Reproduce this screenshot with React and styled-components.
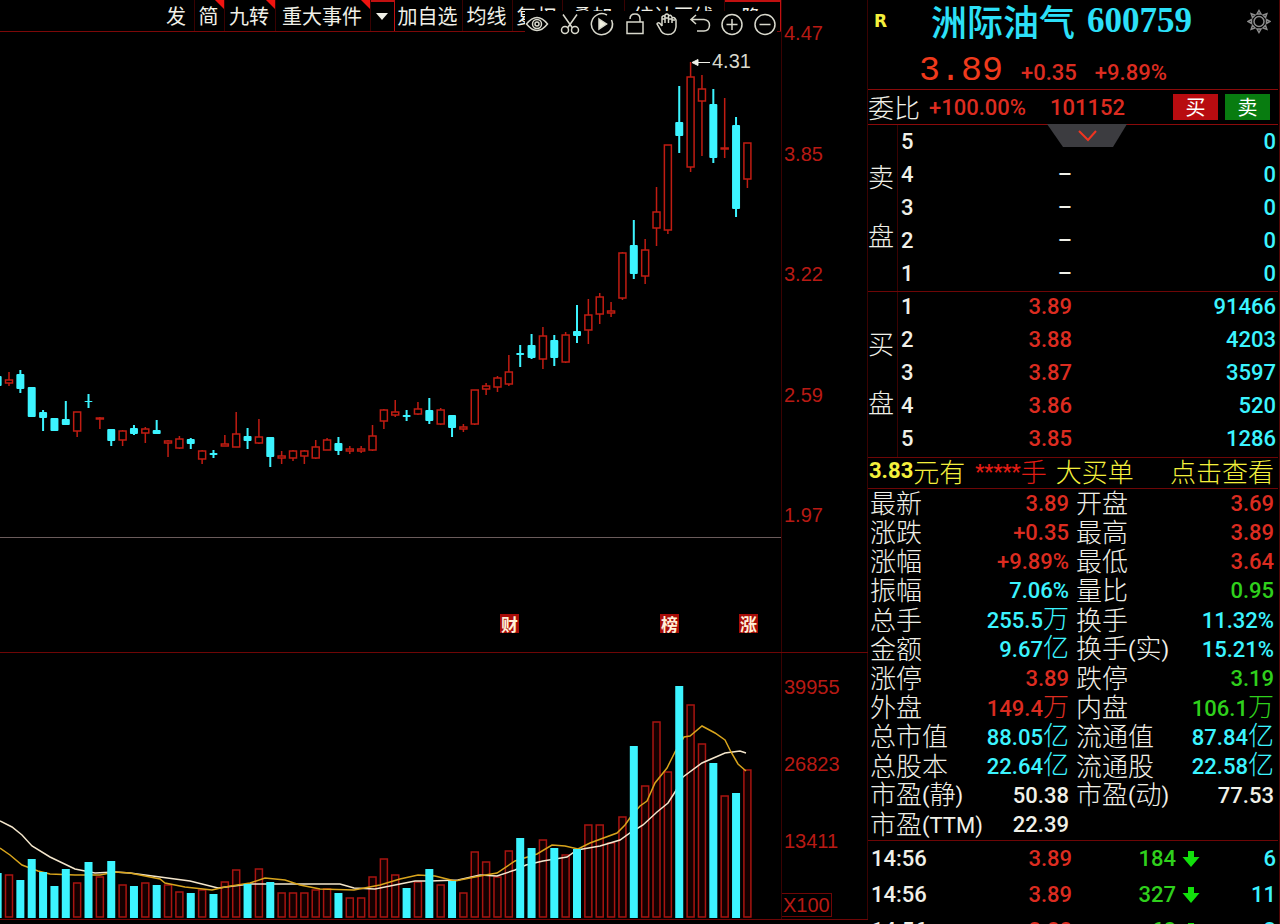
import React from 'react';
import styled, { createGlobalStyle } from 'styled-components';

const CYAN = '#3cf4ff';
const RED = '#dc2c20';
const GREEN = '#2fd01c';
const WHITE = '#f0f0e8';
const YELLOW = '#f4f03c';
const LINE = '#6e0606';
const DIM = '#3a0202';

const Global = createGlobalStyle`
  body { margin: 0; background: #000; }
  * { box-sizing: border-box; }
  button { background: none; border: 0; padding: 0; margin: 0; color: inherit; font: inherit; cursor: pointer; }
  table { border-collapse: collapse; }
  th, td { padding: 0; font-weight: inherit; }
`;

const App = styled.div`
  display: flex;
  height: 100vh;
  overflow: hidden;
  background: #000;
  color: ${WHITE};
  font-family: Roboto, 'Noto Sans CJK SC', sans-serif;
`;

/* ---------- chart side ---------- */

const Charts = styled.main`
  flex: 1;
  min-width: 0;
`;
const Band = styled.section`
  display: flex;
  border-bottom: ${(p) => (p.$line ? `1px solid ${LINE}` : 'none')};
`;
const Plot = styled.div`
  position: relative;
  flex: 1;
  min-width: 0;
  border-bottom: ${(p) => (p.$rule ? '1px solid #6b5c5c' : 'none')};
`;
const Drawing = styled.svg`
  display: block;
  width: 100%;
  height: auto;
`;
const Axis = styled.div`
  display: flex;
  flex-direction: column;
  align-items: flex-start;
  justify-content: ${(p) => (p.$spread ? 'space-between' : 'flex-start')};
  gap: ${(p) => (p.$spread ? 0 : 53)}px;
  width: 87px;
  padding: ${(p) => (p.$spread ? '21px 0 11px' : '22px 0 2px')};
  border-left: 1px solid ${DIM};
  border-right: 1px solid ${DIM};
`;
const Tick = styled.span`
  padding-left: 2px;
  font: 20px/24px 'Liberation Sans', sans-serif;
  color: #b81a14;
`;
const Unit = styled(Tick)`
  margin-top: -13px;
  padding: 0 1px;
  line-height: 22px;
  border: 1px solid ${LINE};
  border-left: 0;
`;

const Toolbar = styled.nav`
  display: flex;
  height: 32px;
  padding-left: 160px;
  border-bottom: 1px solid #7c0808;
`;
const Tool = styled.button`
  position: relative;
  flex: none;
  width: ${(p) => p.$w}px;
  padding-right: 2px;
  overflow: hidden;
  border-right: 1px solid ${(p) => (p.$boxed ? '#c01010' : DIM)};
  border-top: ${(p) => (p.$boxed ? '2px solid #c01010' : 'none')};
  font: 20px/30px 'Noto Sans CJK SC', sans-serif;
  white-space: nowrap;
  &::after {
    content: '';
    display: ${(p) => (p.$flag ? 'block' : 'none')};
    position: absolute;
    top: 0;
    right: 0;
    border-top: 9px solid #f01410;
    border-left: 9px solid transparent;
  }
`;
const Caret = styled.span`
  display: inline-block;
  border-top: 7px solid ${WHITE};
  border-left: 6px solid transparent;
  border-right: 6px solid transparent;
  vertical-align: 5px;
`;
const Floating = styled.div`
  position: absolute;
  top: 11px;
  right: 4px;
  display: flex;
  justify-content: space-between;
  width: 252px;
  height: 27px;
  background: #000;
`;
const IconButton = styled.button`
  width: 24px;
  height: 27px;
  svg { display: block; fill: none; stroke: ${(p) => (p.$muted ? '#8c8c8c' : '#d8d8cc')}; stroke-width: 1.5; }
`;

const Events = styled.div`
  display: flex;
  justify-content: flex-end;
  height: 114px;
  padding: 76px 23px 0 0;
`;
const EventMark = styled.button`
  width: 19px;
  height: 19px;
  margin-right: ${(p) => p.$after}px;
  background: #a80c08;
  color: #fff0d8;
  font: 700 17px/19px 'Noto Sans CJK SC', sans-serif;
`;

/* ---------- quote side ---------- */

const Panel = styled.aside`
  width: 412px;
  padding-right: 1px;
  border-right: 1px solid #500404;
`;
const Header = styled.header`
  height: 90px;
  border-bottom: 1px solid #8a0a0a;
`;
const TitleRow = styled.div`
  display: flex;
  align-items: center;
  height: 42px;
  padding: 0 7px 0 6px;
`;
const Flag = styled.span`
  width: 57px;
  color: ${YELLOW};
  font: 700 17px/20px 'DejaVu Sans', sans-serif;
`;
const Name = styled.h1`
  display: flex;
  align-items: center;
  gap: 12px;
  flex: 1;
  margin: 0;
  padding-bottom: 3px;
  color: #2ce0f8;
  white-space: nowrap;
  font: 500 36px/38px 'Noto Sans CJK SC', sans-serif;
`;
const Code = styled.span`
  padding-top: 3px;
  font: 700 35px/38px 'Liberation Serif', serif;
`;
const Price = styled.div`
  display: flex;
  align-items: baseline;
  gap: 18px;
  padding: 8px 0 0 51px;
  color: ${RED};
  font-size: 22px;
  font-weight: 500;
  line-height: 38px;
`;
const Last = styled.strong`
  color: #f03a1c;
  font: 35px/42px 'Liberation Mono', monospace;
`;
const Commission = styled.div`
  position: relative;
  display: flex;
  align-items: center;
  height: 35px;
  padding-right: 8px;
  border-bottom: 1px solid #8a0a0a;
  color: ${RED};
  font-size: 22px;
  font-weight: 500;
`;
const Label = styled.span`
  width: 61px;
  color: ${WHITE};
  font: 300 26px/32px 'Noto Sans CJK SC', sans-serif;
`;
const Ratio = styled.span`
  width: 121px;
`;
const Trade = styled.button`
  width: 45px;
  height: 26px;
  margin-left: ${(p) => (p.$sell ? 7 : 0)}px;
  background: ${(p) => (p.$sell ? '#087c10' : '#b80c10')};
  color: #fff;
  font: 20px/26px 'Noto Sans CJK SC', sans-serif;
`;
const Spacer = styled.span`
  flex: 1;
`;
const Fold = styled.button`
  position: absolute;
  top: 34px;
  left: 179px;
  width: 80px;
  height: 23px;
  svg { display: block; }
`;

const Book = styled.div`
  display: flex;
  height: ${(p) => (p.$buy ? 166 : 167)}px;
  border-bottom: 1px solid ${LINE};
`;
const Side = styled.div`
  display: flex;
  flex-direction: column;
  align-items: center;
  justify-content: center;
  gap: 33px;
  width: 30px;
  padding: 0 3px 5px 0;
  border-right: 1px solid ${DIM};
  font: 300 26px/26px 'Noto Sans CJK SC', sans-serif;
`;
const Levels = styled.table`
  flex: 1;
  align-self: flex-start;
  font-size: 22px;
  line-height: 26px;
  tr { height: 33px; }
  td, th { padding-bottom: ${(p) => (p.$buy ? 3 : 0)}px; }
`;
const Cell = styled.td`
  width: ${(p) => (p.$w ? `${p.$w}px` : 'auto')};
  padding-left: ${(p) => p.$left || 0}px;
  padding-right: ${(p) => p.$right || 0}px;
  text-align: ${(p) => (p.$start ? 'left' : 'right')};
  color: ${(p) => p.$c || WHITE};
  font-weight: 500;
`;

const Alert = styled.a`
  display: flex;
  align-items: center;
  height: 31px;
  padding: 0 4px 4px 1px;
  border-bottom: 1px solid ${LINE};
  color: ${YELLOW};
  text-decoration: none;
  white-space: nowrap;
  font: 300 26px/26px 'Noto Sans CJK SC', sans-serif;
  b { font: 700 22px/26px Roboto, sans-serif; }
`;
const Masked = styled.span`
  display: flex;
  align-items: center;
  margin: 0 9px 0 10px;
  color: #e01c14;
`;
const Dots = styled.span`
  height: 26px;
  font: 700 20px/28px Roboto, sans-serif;
`;

const Stats = styled.table`
  width: 100%;
  height: 352px;
  border-bottom: 1px solid ${LINE};
  table-layout: fixed;
  tr { height: 29px; }
`;
const StatName = styled.th`
  width: 110px;
  padding: 0 0 4px ${(p) => (p.$second ? 3 : 2)}px;
  text-align: left;
  white-space: nowrap;
  font: 300 26px/24px 'Noto Sans CJK SC', sans-serif;
`;
const Latin = styled.span`
  font: 400 22px/20px Roboto, sans-serif;
  vertical-align: 1px;
`;
const StatValue = styled.td`
  padding-right: 4px;
  text-align: right;
  white-space: nowrap;
  color: ${(p) => p.$c};
  font-size: 22px;
  line-height: 26px;
  font-weight: 500;
  i { font: 300 26px/20px 'Noto Sans CJK SC', sans-serif; }
`;
const Trades = styled.table`
  width: 100%;
  font-size: 22px;
  line-height: 26px;
  tr { height: 36px; }
`;

/* ---------- data ---------- */

// side, high, body top, body bottom, low, volume bar top
const BARS = [
  ['c', 376, 376, 386, 386, 873], ['r', 372, 380, 383, 386, 874], ['c', 370, 374, 389, 393, 880],
  ['c', 387, 387, 417, 417, 859], ['c', 410, 412, 418, 431, 872], ['c', 418, 418, 431, 431, 886],
  ['c', 401, 419, 425, 425, 869], ['r', 412, 412, 431, 437, 882], ['c', 394, 401, 402, 408, 862],
  ['r', 417, 418, 419, 429, 876], ['c', 429, 429, 441, 446, 861], ['r', 430, 431, 440, 446, 884],
  ['c', 425, 428, 434, 435, 886], ['r', 427, 429, 433, 443, 882], ['c', 420, 430, 434, 434, 885],
  ['r', 440, 441, 443, 457, 884], ['r', 436, 439, 448, 449, 891], ['c', 438, 439, 444, 449, 893],
  ['r', 450, 451, 459, 464, 889], ['c', 450, 453, 455, 458, 894], ['r', 435, 444, 446, 446, 881],
  ['r', 412, 434, 447, 447, 869], ['c', 428, 436, 441, 449, 884], ['r', 419, 437, 443, 444, 868],
  ['c', 437, 437, 457, 467, 882], ['r', 451, 456, 458, 464, 892], ['r', 450, 451, 458, 461, 892],
  ['r', 450, 451, 456, 464, 892], ['r', 440, 447, 458, 459, 889], ['r', 438, 440, 450, 450, 888],
  ['c', 437, 443, 451, 455, 893], ['r', 446, 449, 451, 454, 897], ['r', 446, 449, 451, 453, 897],
  ['r', 425, 436, 450, 451, 876], ['r', 409, 410, 421, 429, 858], ['r', 400, 412, 415, 417, 874],
  ['c', 410, 415, 417, 421, 888], ['r', 402, 409, 414, 415, 881], ['c', 398, 410, 421, 424, 869],
  ['r', 408, 410, 424, 425, 884], ['c', 415, 415, 428, 437, 881], ['r', 424, 427, 429, 432, 892],
  ['r', 390, 390, 424, 425, 851], ['r', 383, 386, 389, 395, 861], ['r', 376, 378, 387, 392, 876],
  ['r', 355, 372, 384, 386, 850], ['c', 345, 353, 355, 367, 838], ['c', 334, 345, 358, 359, 848],
  ['r', 327, 336, 359, 369, 839], ['c', 335, 340, 358, 366, 848], ['r', 332, 335, 362, 363, 854],
  ['c', 305, 331, 336, 343, 849], ['r', 299, 315, 330, 344, 824], ['r', 293, 297, 314, 324, 824],
  ['r', 302, 311, 313, 317, 842], ['r', 252, 253, 298, 300, 816], ['c', 220, 245, 274, 279, 746],
  ['r', 239, 250, 276, 284, 785], ['r', 187, 212, 228, 246, 721], ['r', 145, 145, 230, 234, 771],
  ['c', 86, 122, 136, 153, 686], ['r', 62, 77, 167, 172, 704], ['r', 75, 89, 101, 156, 743],
  ['c', 89, 104, 158, 163, 763], ['r', 98, 148, 149, 158, 795], ['c', 117, 125, 209, 217, 793],
  ['r', 143, 143, 179, 188, 769],
];
const barX = (i) => 9 + 11.36 * (i - 1);

const MA_SLOW = '0,821 12,827 22,835 32,846 50,857 75,869 95,873 115,872 130,873 160,877 190,881 218,888 250,884 290,884 340,884 354,888 375,889 395,885 415,881 430,881 458,880 480,875 497,876 515,870 526,865 543,861 567,857 577,850 600,846 620,840 630,833 643,825 657,812 668,803 675,792 683,777 702,763 725,753 740,751 746,753';
const MA_FAST = '0,848 10,855 22,865 38,871 50,874 75,875 100,875 115,872 130,873 160,879 165,883 185,887 212,890 225,887 250,883 265,878 285,880 300,885 320,889 354,890 380,885 400,879 418,875 435,876 455,881 480,876 497,873 515,861 537,854 552,845 565,846 578,849 590,843 617,833 625,825 632,815 640,806 647,801 655,783 667,768 675,752 684,737 690,736 702,726 715,733 725,740 731,752 738,764 746,771';

const TOOLS = [
  { t: '发', w: 35 }, { t: '简', w: 30, flag: true }, { t: '九转', w: 51, flag: true },
  { t: '重大事件', w: 95, flag: true }, { t: '', w: 24, boxed: true }, { t: '加自选', w: 68 },
  { t: '均线', w: 50 }, { t: '复权', w: 50 }, { t: '叠加', w: 62 }, { t: '统计画线', w: 100 }, { t: '隐', w: 56, boxed: true },
];

const ICONS = [
  ['显示', <g key="a"><path d="M1.500 13Q12 0 22.500 13Q12 26 1.500 13Z" /><circle cx="12" cy="13" r="4.500" /><circle cx="12" cy="13" r="2" /></g>],
  ['剪切', <g key="b"><path d="M5 3.500L14.500 17M19 3.500L9.500 17" /><circle cx="7" cy="19" r="3.500" /><circle cx="17" cy="19" r="3.500" /></g>],
  ['播放', <g key="c"><path d="M17 4A10.500 10.500 0 1 0 21.500 9M22.500 12A10.500 10.500 0 0 1 19 21" /><path d="M9 8L16.500 13L9 18Z" fill="#f0f0e0" /></g>],
  ['锁定', <g key="d"><path d="M4 11H20V22.500H4ZM7 8Q7 3 12 3Q17 3 17 8V11" /></g>],
  ['拖动', <g key="e"><path d="M7 15V6Q8.500 3.500 10 6V12V4Q12 2 13.500 4V12V5Q15.500 3 17 6V12V7Q19.500 5.500 21 9V16Q20 23.500 13 23.500Q7 23.500 5 18L2 13Q2.500 11 5 12.500L7 15" /><path d="M7 8H10M10 7H13M14 8H17M17 9H20" /></g>],
  ['撤销', <g key="f"><path d="M8 4L3 8.500L8 13M3 8.500H16Q21.500 9 21.500 14.500Q21 20 16 20H9" /></g>],
  ['放大', <g key="g"><circle cx="12" cy="13.500" r="10" /><path d="M12 8V19M6.500 13.500H17.500" /></g>],
  ['缩小', <g key="h"><circle cx="12" cy="13.500" r="10" /><path d="M6.500 13.500H17.500" /></g>],
];

const SELLS = [['5', '', '0'], ['4', '–', '0'], ['3', '–', '0'], ['2', '–', '0'], ['1', '–', '0']];
const BUYS = [['1', '3.89', '91466'], ['2', '3.88', '4203'], ['3', '3.87', '3597'], ['4', '3.86', '520'], ['5', '3.85', '1286']];

const STATS = [
  ['最新', '3.89', '', RED, '开盘', '3.69', '', RED],
  ['涨跌', '+0.35', '', RED, '最高', '3.89', '', RED],
  ['涨幅', '+9.89%', '', RED, '最低', '3.64', '', RED],
  ['振幅', '7.06%', '', CYAN, '量比', '0.95', '', GREEN],
  ['总手', '255.5', '万', CYAN, '换手', '11.32%', '', CYAN],
  ['金额', '9.67', '亿', CYAN, '换手(实)', '15.21%', '', CYAN],
  ['涨停', '3.89', '', RED, '跌停', '3.19', '', GREEN],
  ['外盘', '149.4', '万', RED, '内盘', '106.1', '万', GREEN],
  ['总市值', '88.05', '亿', CYAN, '流通值', '87.84', '亿', CYAN],
  ['总股本', '22.64', '亿', CYAN, '流通股', '22.58', '亿', CYAN],
  ['市盈(静)', '50.38', '', WHITE, '市盈(动)', '77.53', '', WHITE],
  ['市盈(TTM)', '22.39', '', WHITE, '', '', '', WHITE],
];
const TRADES = [['14:56', '3.89', '184', '6'], ['14:56', '3.89', '327', '11'], ['14:56', '3.88', '68', '3']];

/* ---------- parts ---------- */

function Candles() {
  return (
    <Drawing viewBox="0 32 781 505" role="img" aria-label="日K线">
      {BARS.map(([side, high, top, bottom, low], i) => {
        const x = barX(i);
        if (side === 'c') {
          return (
            <g key={i} fill={CYAN}>
              <rect x={x - 1} y={high} width="2" height={low - high} />
              <rect x={x - 4} y={top} width="8" height={bottom - top} rx="1" />
            </g>
          );
        }
        return (
          <g key={i} stroke="#c01c12" strokeWidth="1.500" fill="none">
            <path d={`M${x} ${high}V${top}M${x} ${bottom}V${low}`} />
            <rect x={x - 3.5} y={top} width="7" height={Math.max(1, bottom - top)} />
          </g>
        );
      })}
      <path d="M693 62.500H710M698 59.500L692 62.500L698 65.500Z" stroke={WHITE} fill={WHITE} />
      <text x="712" y="68" fill="#d8d8cc" fontFamily="Liberation Sans, sans-serif" fontSize="20">4.31</text>
    </Drawing>
  );
}

function Volumes() {
  return (
    <Drawing viewBox="0 653 781 265" role="img" aria-label="成交量">
      {BARS.map(([side, , , , , top], i) => side === 'r' && (
        <rect key={i} x={barX(i) - 3.5} y={top + 1} width="7" height={916 - top} fill="#140000" stroke="#a81410" strokeWidth="1.500" />
      ))}
      <polyline points={MA_SLOW} fill="none" stroke="#f4e6cc" strokeWidth="1.500" />
      <polyline points={MA_FAST} fill="none" stroke="#d8a41c" strokeWidth="1.500" />
      {BARS.map(([side, , , , , top], i) => side === 'c' && (
        <rect key={i} x={barX(i) - 4} y={top} width="8" height={918 - top} fill={CYAN} />
      ))}
    </Drawing>
  );
}

const Arrow = styled.svg`
  display: block;
`;
function DownArrow() {
  return (
    <Arrow width="18" height="18" viewBox="0 0 18 18" aria-label="卖出">
      <path d="M6 1H12V7H17.500L9 17L0.500 7H6Z" fill="#12e00c" />
    </Arrow>
  );
}

function OrderBook({ side, rows, buy }) {
  return (
    <Book $buy={buy}>
      <Side><span>{side}</span><span>盘</span></Side>
      <Levels $buy={buy}>
        <tbody>
          {rows.map(([level, price, volume]) => (
            <tr key={level}>
              <Cell as="th" scope="row" $start $w={26} $left={3}>{level}</Cell>
              <Cell $w={148} $c={buy ? RED : WHITE}>{price}</Cell>
              <Cell $right={2} $c={CYAN}>{volume}</Cell>
            </tr>
          ))}
        </tbody>
      </Levels>
    </Book>
  );
}

function StatLabel({ text }) {
  return text.split(/([()A-Z]+)/).map((part, i) => (i % 2 ? <Latin key={i}>{part}</Latin> : part));
}

export default function StockTerminal() {
  return (
    <App>
      <Global />
      <Charts>
        <Band>
          <Plot $rule>
            <Toolbar>
              {TOOLS.map(({ t, w, flag, boxed }) => (
                <Tool key={t || 'more'} $w={w} $flag={flag} $boxed={boxed} aria-label={t || '更多'}>{t || <Caret />}</Tool>
              ))}
            </Toolbar>
            <Floating>
              {ICONS.map(([label, shape]) => (
                <IconButton key={label} aria-label={label}>
                  <svg width="24" height="27" viewBox="0 0 24 27">{shape}</svg>
                </IconButton>
              ))}
            </Floating>
            <Candles />
          </Plot>
          <Axis $spread>
            {['4.47', '3.85', '3.22', '2.59', '1.97'].map((t) => <Tick key={t}>{t}</Tick>)}
          </Axis>
        </Band>
        <Band $line>
          <Plot>
            <Events>
              <EventMark $after={141}>财</EventMark>
              <EventMark $after={60}>榜</EventMark>
              <EventMark $after={0}>涨</EventMark>
            </Events>
          </Plot>
          <Axis $spread />
        </Band>
        <Band $line>
          <Plot><Volumes /></Plot>
          <Axis>
            {['39955', '26823', '13411'].map((t) => <Tick key={t}>{t}</Tick>)}
            <Unit>X100</Unit>
          </Axis>
        </Band>
      </Charts>

      <Panel>
        <Header>
          <TitleRow>
            <Flag>R</Flag>
            <Name>洲际油气<Code>600759</Code></Name>
            <IconButton $muted aria-label="设置">
              <svg width="24" height="27" viewBox="0 0 24 27">
                <circle cx="12" cy="13.500" r="5" />
                <path d="M12 2.500L14 6H10ZM12 24.500L14 21H10ZM1 13.500L4.500 11.500V15.500ZM23 13.500L19.500 11.500V15.500ZM4.200 5.700L8 7L5.500 9.500ZM19.800 5.700L16 7L18.500 9.500ZM4.200 21.300L8 20L5.500 17.500ZM19.800 21.300L16 20L18.500 17.500Z" />
              </svg>
            </IconButton>
          </TitleRow>
          <Price><Last>3.89</Last><span>+0.35</span><span>+9.89%</span></Price>
        </Header>
        <Commission>
          <Label>委比</Label>
          <Ratio>+100.00%</Ratio>
          <span>101152</span>
          <Spacer />
          <Trade>买</Trade>
          <Trade $sell>卖</Trade>
          <Fold aria-label="展开">
            <svg width="80" height="23" viewBox="0 0 80 23">
              <path d="M0 0H80L66 23H16Z" fill="#3c3c40" />
              <path d="M32 7L41 16L49 7" fill="none" stroke="#f03420" strokeWidth="2" />
            </svg>
          </Fold>
        </Commission>
        <OrderBook side="卖" rows={SELLS} />
        <OrderBook side="买" rows={BUYS} buy />
        <Alert href="#orders">
          <b>3.83</b>元有
          <Masked><Dots>*****</Dots>手</Masked>
          大买单
          <Spacer />
          点击查看
        </Alert>
        <Stats>
          <tbody>
            {STATS.map(([a, av, au, ac, b, bv, bu, bc]) => (
              <tr key={a}>
                <StatName scope="row"><StatLabel text={a} /></StatName>
                <StatValue $c={ac}>{av}{au && <i>{au}</i>}</StatValue>
                <StatName scope="row" $second><StatLabel text={b} /></StatName>
                <StatValue $c={bc}>{bv}{bu && <i>{bu}</i>}</StatValue>
              </tr>
            ))}
          </tbody>
        </Stats>
        <Trades>
          <tbody>
            {TRADES.map(([time, price, volume, count], i) => (
              <tr key={i}>
                <Cell $start $left={3} $w={90}>{time}</Cell>
                <Cell $c={RED} $w={114}>{price}</Cell>
                <Cell $c={GREEN} $w={104}>{volume}</Cell>
                <Cell $left={6} $w={24}><DownArrow /></Cell>
                <Cell $c={CYAN} $right={2}>{count}</Cell>
              </tr>
            ))}
          </tbody>
        </Trades>
      </Panel>
    </App>
  );
}
